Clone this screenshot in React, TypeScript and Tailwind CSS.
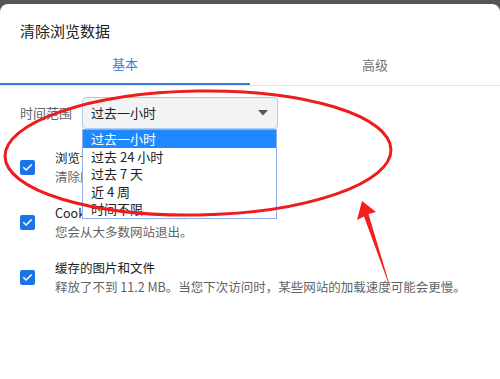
import React from 'react';

const font = { fontFamily: '"Noto Sans CJK SC", "Noto Sans", sans-serif' };

const Check = () => (
  <div className="w-[15px] h-[15px] rounded-[2px] bg-[#1a73e8] flex items-center justify-center shrink-0">
    <svg width="11" height="11" viewBox="0 0 24 24" fill="none" stroke="white" strokeWidth="3.4" strokeLinecap="square">
      <path d="M4 12.5l5 5L20 6.5" />
    </svg>
  </div>
);

const Row = ({ title, sub }: { title: string; sub: string }) => (
  <div className="flex items-center pl-5">
    <Check />
    <div className="ml-5 text-[12.5px] leading-[19px] whitespace-nowrap">
      <div className="text-[#202124]">{title}</div>
      <div className="text-[#5f6368]">{sub}</div>
    </div>
  </div>
);

const options = ['过去一小时', '过去 24 小时', '过去 7 天', '近 4 周', '时间不限'];

export default function App() {
  return (
    <div className="w-[500px] h-[379px] bg-[#555555] pt-[4px] overflow-hidden relative" style={font}>
      <div className="bg-white h-full rounded-t-[8px]">
        <div className="pl-5 pt-[17px] text-[15px] leading-[20px] text-[#202124]">清除浏览数据</div>

        <div className="flex mt-[3px] border-b border-[#e3e3e3]">
          <div className="flex-1 h-[41px] flex items-center justify-center text-[13px] text-[#3b7ddd] border-b-2 border-[#3b7ddd] -mb-px">
            基本
          </div>
          <div className="flex-1 h-[41px] flex items-center justify-center text-[13px] text-[#6f7378]">高级</div>
        </div>

        <div className="flex items-center mt-[11px] pl-5">
          <span className="text-[13px] text-[#5f6368] w-[62px]">时间范围</span>
          <div className="relative">
            <div className="w-[196px] h-[32px] rounded-[4px] border border-[#b3c9ef] bg-[#f1f3f4] flex items-center justify-between pl-[8px] pr-[9px] text-[13px] text-[#202124]">
              <span>过去一小时</span>
              <svg width="10" height="6" viewBox="0 0 10 6">
                <path d="M0 0h10L5 5.5z" fill="#555" />
              </svg>
            </div>
            <div className="absolute left-0 top-[32px] w-[195px] bg-white border border-[#8fb0e6] z-10">
              {options.map((o, i) => (
                <div
                  key={o}
                  className={
                    i === 0
                      ? 'h-[17.5px] leading-[17.5px] pl-[8px] text-[13px] bg-[#1e88ff] text-white'
                      : 'h-[17.5px] leading-[17.5px] pl-[8px] text-[13px] text-[#202124]'
                  }
                >
                  {o}
                </div>
              ))}
            </div>
          </div>
        </div>

        <div className="flex flex-col gap-[17px] mt-[19px]">
          <Row title="浏览记录" sub="清除所有已登录设备中的记录" />
          <Row title="Cookie 及其他网站数据" sub="您会从大多数网站退出。" />
          <Row title="缓存的图片和文件" sub="释放了不到 11.2 MB。当您下次访问时，某些网站的加载速度可能会更慢。" />
        </div>
      </div>

      {/* red annotation */}
      <svg className="absolute inset-0 z-20 pointer-events-none" width="500" height="379" viewBox="0 0 500 379">
        <ellipse cx="198" cy="153" rx="193" ry="62" fill="none" stroke="#ee1c1c" strokeWidth="3" transform="rotate(-1 198 153)" />
        <polygon points="362,201 376,212 368.5,214 392,293 364,216.5 357,220" fill="#f41e1e" />
      </svg>
    </div>
  );
}
